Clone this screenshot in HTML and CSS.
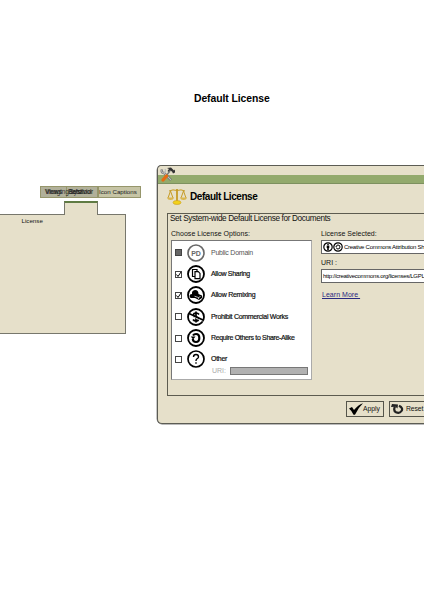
FILE: index.html
```html
<!DOCTYPE html>
<html lang="en">
<head>
<meta charset="utf-8">
<title>Default License</title>
<link rel="stylesheet" href="styles.css">
</head>
<body>
<h1 class="page-title">Default License</h1>
<main class="stage">
  <section class="side">
    <nav class="tabs">
      <span class="tab views">Views</span>
      <span class="tab behavior">Behavior</span>
      <span class="tab imaging">Imaging/syst</span>
      <span class="tab selected">Sets/tool</span>
      <span class="tab captions">Icon Captions</span>
    </nav>
    <div class="folder-tab"></div>
    <div class="folder"><span class="folder-label">License</span></div>
  </section>
  <section class="window">
    <div class="titlebar">
      <svg class="tools" viewBox="0 0 16 15"><path d="M2 2.500Q1 6 4 6l7 7" fill="none" stroke="#555" stroke-width="2.400"/><path d="M2 2.500Q1 6 4 6l7 7M4 6Q6.500 5 5 2" fill="none" stroke="#bbb" stroke-width="1.300"/><path d="M7 1l4-.5 3 3 1-1v3l-2 1-1-2-2-1-1.500 1.500-1-1 1.500-2z" fill="#333"/><path d="M10 4L6 9" stroke="#777" stroke-width="1.500"/><path d="M6.500 9L3 13" stroke="#e76a12" stroke-width="3.200" stroke-linecap="round"/></svg>
    </div>
    <header class="heading">
      <svg class="scales" viewBox="0 0 20 17"><g fill="none" stroke="#c69b25" stroke-width="1"><path d="M2 3Q6 1 10 2.500Q14 1 18 3M3.500 3L1 10M3.500 3L6 10M16.500 3L14 10M16.500 3L19 10"/><path d="M10 1v12" stroke-width="1.800"/></g><path d="M0 9.500h7q-.5 2.500-3.500 2.500T0 9.500M13 9.500h7q-.5 2.500-3.500 2.500T13 9.500" fill="#d9b650"/><ellipse cx="10" cy="14.500" rx="4" ry="2" fill="#f3d21b" stroke="#c69b25" stroke-width=".6"/></svg>
      <h2>Default License</h2>
    </header>
    <div class="panel">
      <p class="lead">Set System-wide Default License for Documents</p>
      <div class="columns">
        <div class="choose">
          <p class="label">Choose License Options:</p>
          <div class="options">
            <div class="option off"><i class="box filled"></i>
              <svg class="icon" viewBox="0 0 18 18"><circle cx="9" cy="9" r="8" fill="#fff" stroke="#686868" stroke-width="1.600"/><text x="9" y="11.500" text-anchor="middle" class="pd">PD</text></svg>
              <span class="t-public">Public Domain</span></div>
            <div class="option"><i class="box"><svg viewBox="0 0 7 7"><path d="M1.500 3.500l1.500 2L6 1" fill="none" stroke="#000" stroke-width="1"/></svg></i>
              <svg class="icon" viewBox="0 0 18 18"><circle cx="9" cy="9" r="8" fill="#fff" stroke="#000" stroke-width="1.800"/><path d="M5.500 4.500h4.500v7H5.500z" fill="#fff" stroke="#000" stroke-width="1.200"/><path d="M8 6.700h3.300l1.700 1.700v5.300H8z" fill="#fff" stroke="#000" stroke-width="1.200"/></svg>
              <span class="t-sharing">Allow Sharing</span></div>
            <div class="option"><i class="box"><svg viewBox="0 0 7 7"><path d="M1.500 3.500l1.500 2L6 1" fill="none" stroke="#000" stroke-width="1"/></svg></i>
              <svg class="icon" viewBox="0 0 18 18"><circle cx="9" cy="9" r="8" fill="#fff" stroke="#000" stroke-width="1.800"/><path d="M2.500 10Q2.500 8 5 8Q4.500 4.500 8 4Q11.500 4 11.500 8L15 9.500V12L12 14 8 12 3.500 12z"/><path d="M7.500 10.200l4 1.300v1.500M11.500 11.500l2-1" fill="none" stroke="#fff" stroke-width=".7"/></svg>
              <span class="t-remixing">Allow Remixing</span></div>
            <div class="option"><i class="box"></i>
              <svg class="icon" viewBox="0 0 18 18"><circle cx="9" cy="9" r="8" fill="#fff" stroke="#000" stroke-width="1.800"/><path d="M12 6.500Q11 5 9 5Q6.500 5 6.500 7T9 9T11.500 11T9 13Q7 13 6 11.500M9 3.500v11" fill="none" stroke="#000" stroke-width="1.700"/><path d="M2.500 7l13 6" stroke="#fff" stroke-width="1"/><path d="M2 5.500l14 6.500" stroke="#000" stroke-width="1.700"/></svg>
              <span class="t-prohibit">Prohibit Commercial Works</span></div>
            <div class="option"><i class="box"></i>
              <svg class="icon" viewBox="0 0 18 18"><circle cx="9" cy="9" r="8" fill="#fff" stroke="#000" stroke-width="1.800"/><path d="M6 6.500Q7 5 9 5Q12.300 5 12.300 9T9 13Q6 13 5.800 10" fill="none" stroke="#000" stroke-width="2.200"/><path d="M3.800 7.500h4.700L6.100 10.500z"/></svg>
              <span class="t-require">Require Others to Share-Alike</span></div>
            <div class="option"><i class="box"></i>
              <svg class="icon" viewBox="0 0 18 18"><circle cx="9" cy="9" r="8" fill="#fff" stroke="#000" stroke-width="1.700"/><path d="M6.500 7Q6.500 4.500 9 4.500T11.500 7Q11.500 8 9.800 9Q9 9.600 9 11M9 12.300v1.500" fill="none" stroke="#000" stroke-width="1.400"/></svg>
              <span class="t-other">Other</span></div>
            <div class="uri-row"><span>URI:</span><i class="uri-input"></i></div>
          </div>
        </div>
        <div class="result">
          <p class="label">License Selected:</p>
          <div class="field selected-license">
            <svg class="cc" viewBox="0 0 20 10"><circle cx="5" cy="5" r="4.200" fill="#fff" stroke="#000" stroke-width="1.200"/><circle cx="5" cy="2.500" r=".8"/><path d="M3.700 3.600h2.600v2.500H5.800V8.300H4.200V6.100h-.5z"/><circle cx="15" cy="5" r="4.200" fill="#fff" stroke="#000" stroke-width="1.200"/><path d="M13.300 4Q13.800 3 15 3Q17 3 17 5T15 7Q13.700 7 13.300 6" fill="none" stroke="#000" stroke-width="1"/><path d="M12.200 4.300h2.200l-1.100 1.500z"/></svg>
            <span>Creative Commons Attribution Sh</span></div>
          <p class="label uri-label">URI :</p>
          <div class="field url"><span>http://creativecommons.org/licenses/LGPL</span></div>
          <a class="learn">Learn More&nbsp;</a>
        </div>
      </div>
    </div>
    <footer class="actions">
      <span class="button apply"><svg viewBox="0 0 14 12"><path d="M0 5.500L3 4l2 3Q9 2 14 .3Q9 5 6 11.700H4.500Q3 8 0 5.500z"/></svg>Apply</span>
      <span class="button reset"><svg viewBox="0 0 13 12"><path d="M4 3.500Q2 7.500 5 9.300Q8.500 11 10.500 8T8 2.800" fill="none" stroke="#222" stroke-width="2.200"/><path d="M0 4L1 1l6 .5-.5 4-2-1.700z" fill="#222"/></svg>Reset</span>
    </footer>
  </section>
</main>
</body>
</html>
```

FILE: styles.css
```css
* { box-sizing: border-box; }
html, body { height: 600px; overflow: hidden; }
body { margin: 0; background: #fff; color: #111; font-family: "Liberation Sans", Arial, sans-serif; font-size: 7px; line-height: 10px; }
p, h1, h2 { margin: 0; white-space: nowrap; }
span, a { white-space: nowrap; }
svg { display: block; flex: none; }
.page-title { padding: 92px 0 0 194px; height: 165px; font-size: 10.4px; letter-spacing: -.08px; line-height: 13px; color: #000; }
.stage { display: flex; width: 424px; height: 262px; overflow: hidden; }
.side { width: 126px; margin-right: 31px; padding-top: 21px; flex: none; }
.tabs { position: relative; height: 12px; margin-left: 40px; width: 101px; background: #c6c4a5; border: 1px solid #96966b; }
.tab { position: absolute; top: -1px; height: 12px; border: 1px solid #96966b; line-height: 10px; font-size: 6.4px; color: #222; }
.views { left: -1px; width: 27px; padding-left: 4px; background: #b1b09a; -webkit-text-stroke: .2px #222; }
.imaging { left: -1px; padding-left: 6px; border: 0; line-height: 12px; color: #333; }
.behavior { left: 25px; width: 33px; padding-left: 1px; background: #b1b09a; }
.selected { left: 28px; border: 0; line-height: 12px; letter-spacing: -.3px; }
.captions { left: 56px; width: 44px; padding-left: 1px; font-size: 6.2px; }
.folder-tab { width: 34px; height: 14px; margin: 3px 0 -1px 64px; position: relative; background: #e6e0ca; border: 1px solid #77776c; border-top: 2px solid #5f7b43; border-bottom: 0; }
.folder { height: 120px; background: #e6e0ca; border: 1px solid #77776c; border-left: 0; padding: 1px 0 0 21.5px; }
.folder-label { font-size: 6.2px; }
.window { width: 267px; height: 259px; flex: none; background: #e6e0ca; border: 1px solid #5c5c54; border-right: 0; border-radius: 5px 0 0 5px; box-shadow: 0 0 0 .4px #777; }
.titlebar { height: 18px; padding: 1px 0 0 2px; background: linear-gradient(#e6e0ca 0 9px, #93aa6d 9px 17px, #7d915f 17px); border-radius: 4px 0 0 0; }
.tools { width: 16px; height: 15px; }
.heading { display: flex; height: 29px; padding: 4px 0 0 9px; gap: 3px; }
.scales { width: 20px; height: 17px; }
.heading h2 { font-size: 10px; line-height: 18px; letter-spacing: -.44px; color: #000; }
.panel { height: 183px; margin-left: 9px; border: 1px solid #5d5c50; border-right: 0; padding: 0 0 0 2px; }
.lead { font-size: 8.2px; letter-spacing: -.34px; line-height: 10px; }
.columns { display: flex; padding: 5px 0 0 1px; }
.choose { width: 141px; margin-right: 9px; flex: none; }
.label { font-size: 7px; line-height: 10px; letter-spacing: .03px; }
.options { height: 140px; margin-top: 1px; padding: 1px 0 0 3px; background: #fff; border: 1px solid #777; border-right-color: #aaa; border-bottom-color: #aaa; }
.option { height: 21.35px; display: flex; align-items: center; font-size: 7px; -webkit-text-stroke: .2px #111; }
.option.off { color: #555; -webkit-text-stroke: 0; }
.box { width: 7px; height: 7px; border: 1px solid #444; margin-right: 5px; flex: none; }
.box.filled { background: #666; }
.box svg { width: 7px; height: 7px; margin: -1px; }
.icon { width: 18px; height: 18px; margin-right: 6px; }
.pd { font: bold 7px "Liberation Sans", sans-serif; fill: #686868; }
.t-public { letter-spacing: -.24px; }
.t-sharing, .t-other { letter-spacing: -.3px; }
.t-remixing { letter-spacing: -.25px; }
.t-prohibit { letter-spacing: -.31px; }
.t-require { letter-spacing: -.34px; }
.uri-row { display: flex; align-items: center; height: 10px; margin-top: -4px; padding-left: 37px; gap: 5px; color: #aaa; }
.uri-row span { width: 13px; }
.uri-input { width: 78px; height: 8px; background: #b1b1b1; border: 1px solid #777; }
.result { flex: 1; min-width: 0; }
.field { display: flex; align-items: center; height: 14px; margin-top: 1px; background: #fff; border: 1px solid #666; border-right: 0; font-size: 6px; color: #000; }
.cc { width: 20px; height: 10px; margin: 0 1px; }
.selected-license { letter-spacing: -.27px; }
.uri-label { margin-top: 4px; }
.url { padding-left: 1px; font-size: 6px; letter-spacing: -.28px; }
.learn { display: inline-block; margin: 7px 0 0 1px; color: #292980; text-decoration: underline; font-size: 7px; letter-spacing: .03px; }
.actions { display: flex; gap: 5px; padding: 5px 0 0 188px; }
.button { display: flex; align-items: center; height: 16px; border: 1px solid #55554b; font-size: 6.8px; line-height: 12px; padding-bottom: 1px; }
.apply { width: 38px; flex: none; padding-left: 2px; }
.apply svg { width: 14px; height: 12px; }
.reset { width: 35px; flex: none; border-right: 0; padding-left: 1px; gap: 2px; letter-spacing: -.1px; }
.reset svg { width: 13px; height: 12px; }
```
